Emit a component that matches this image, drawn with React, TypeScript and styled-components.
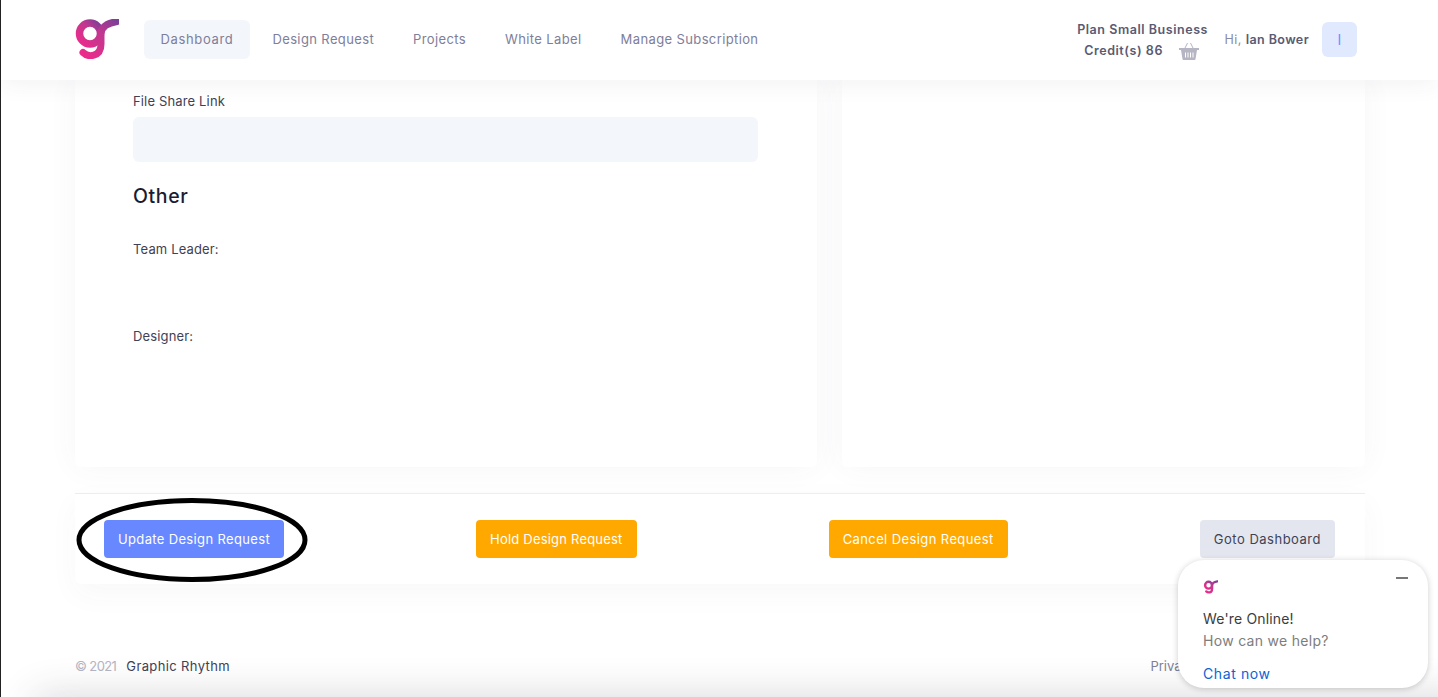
import styled, { createGlobalStyle } from "styled-components";

const GlobalStyle = createGlobalStyle`
  html, body {
    margin: 0;
    padding: 0;
    height: 100%;
    background: #fff;
    overflow: hidden;
  }
  * {
    box-sizing: border-box;
  }
  body {
    font-family: "Inter", "Liberation Sans", sans-serif;
    color: #3f3f5a;
  }
`;

const Page = styled.div`
  position: relative;
  width: 1438px;
  height: 697px;
  overflow: hidden;
  border-left: 1px solid #222;
  background: #fff;

  /* soft shadow of the bar that sits just under the fold */
  &::after {
    content: "";
    position: absolute;
    left: 34px;
    right: -60px;
    top: 697px;
    height: 40px;
    box-shadow: 0 0 40px rgba(50, 50, 70, 0.2);
  }
`;

const Header = styled.header`
  position: relative;
  z-index: 2;
  height: 80px;
  padding: 0 81px 2px 72px;
  display: flex;
  align-items: center;
  background: #fff;
  box-shadow: 0 2px 24px rgba(60, 60, 90, 0.07);
`;

const Logo = styled.svg`
  width: 46px;
  height: 40px;
  margin-right: 25px;
  flex: none;
`;

const Nav = styled.nav`
  display: flex;
  align-items: center;
  gap: 6px;
`;

const NavItem = styled.a<{ $active?: boolean }>`
  height: 39px;
  padding: 0 16.5px;
  display: flex;
  align-items: center;
  border-radius: 6px;
  font-size: 13px;
  letter-spacing: ${(p) => (p.$active ? "0.65px" : "0.38px")};
  color: #7e7e9a;
  background: ${(p) => (p.$active ? "#f3f6fb" : "transparent")};
`;

const Account = styled.div`
  margin-left: auto;
  display: flex;
  align-items: center;
`;

const Plan = styled.div`
  width: 134px;
  padding-top: 2px;
  text-align: center;
  font-size: 12.5px;
  font-weight: 600;
  line-height: 21px;
  letter-spacing: 0.55px;
  color: #5a5a72;
`;

const CreditRow = styled.div`
  display: flex;
  justify-content: center;
  align-items: center;
  gap: 16px;
  padding-right: 2px;
`;

const Hi = styled.div`
  margin-left: 15px;
  font-size: 12.5px;
  letter-spacing: 0.4px;
  color: #8a8aa3;

  b {
    font-weight: 600;
    color: #5a5a72;
  }
`;

const Avatar = styled.div`
  margin-left: 13px;
  width: 35px;
  height: 35px;
  display: flex;
  align-items: center;
  justify-content: center;
  border-radius: 6px;
  font-size: 14px;
  color: #6993ff;
  background: #e1e9ff;
`;

const Content = styled.main`
  width: 1290px;
  margin-left: 74px;
`;

const Columns = styled.div`
  display: grid;
  grid-template-columns: 742px 523px;
  gap: 25px;
`;

const Card = styled.section`
  height: 387px;
  background: #fff;
  box-shadow: 0 0 30px rgba(80, 70, 120, 0.05);
  border-radius: 0 0 6px 6px;
`;

const FormCard = styled(Card)`
  padding: 12px 59px 0 58px;
`;

const Label = styled.div`
  font-size: 13px;
  line-height: 18px;
  letter-spacing: 0.15px;
  color: #3f4254;
`;

const Input = styled.div`
  height: 45px;
  margin-top: 7px;
  border-radius: 6px;
  background: #f3f6fb;
`;

const SectionTitle = styled.h3`
  margin: 21px 0 31px;
  font-size: 19.5px;
  line-height: 26px;
  font-weight: 500;
  letter-spacing: 0.6px;
  color: #1b1b32;
`;

const Person = styled(Label)`
  margin-bottom: 69px;
`;

const ActionBar = styled.div`
  height: 91px;
  margin-top: 26px;
  padding: 0 30px 0 29px;
  display: flex;
  align-items: center;
  justify-content: space-between;
  background: #fff;
  border-top: 1px solid #ebedf3;
  box-shadow: 0 10px 30px rgba(80, 70, 120, 0.04);
  border-radius: 0 0 6px 6px;
`;

const Button = styled.button<{ $kind: "primary" | "warning" | "light"; $tracking: number }>`
  height: 38px;
  padding: 0 14px;
  border: 0;
  border-radius: 4px;
  font-family: inherit;
  font-size: 13px;
  letter-spacing: ${(p) => p.$tracking}px;
  color: ${(p) => (p.$kind === "light" ? "#3f4254" : "#fff")};
  background: ${(p) =>
    p.$kind === "primary"
      ? "#6788ff"
      : p.$kind === "warning"
      ? "#ffa800"
      : "#e4e6ef"};
`;

const Footer = styled.footer`
  margin-top: 73px;
  display: flex;
  justify-content: space-between;
  font-size: 13px;
  line-height: 18px;
`;

const Copy = styled.span`
  color: #b5b5c3;
  margin-right: 10px;
  letter-spacing: -0.6px;
`;

const Brand = styled.span`
  color: #3f4254;
  letter-spacing: 0.38px;
`;

const FooterLink = styled.span`
  color: #7e8299;
  margin-right: 169px;
`;

const Circle = styled.svg`
  position: absolute;
  left: 74px;
  top: 497px;
  width: 234px;
  height: 86px;
`;

const Chat = styled.aside`
  position: absolute;
  z-index: 3;
  left: 1177px;
  top: 560px;
  width: 250px;
  height: 128px;
  padding: 20px 25px 0;
  border-radius: 26px;
  background: #fff;
  box-shadow: 0 1px 6px rgba(0, 0, 0, 0.2);
`;

const ChatLogo = styled.svg`
  display: block;
  width: 15px;
  height: 14px;
  margin-bottom: 15px;
`;

const Minimize = styled.div`
  position: absolute;
  top: 17px;
  right: 20px;
  width: 12px;
  height: 2px;
  background: #777;
`;

const ChatTitle = styled.div`
  font-size: 14px;
  line-height: 20px;
  letter-spacing: 0.17px;
  color: #3c3c3c;
`;

const ChatText = styled.div`
  margin-top: 2px;
  font-size: 14px;
  line-height: 20px;
  letter-spacing: 0.3px;
  color: #7d7d7d;
`;

const ChatLink = styled.div`
  margin-top: 13px;
  font-size: 14px;
  line-height: 20px;
  letter-spacing: 0.6px;
  color: #0b63d6;
`;

function GrMark() {
  return (
    <>
      <defs>
        <linearGradient id="gr" x1="0" y1="1" x2="1" y2="0">
          <stop offset="0" stopColor="#ee2a8b" />
          <stop offset="0.6" stopColor="#c2388f" />
          <stop offset="1" stopColor="#7d3f98" />
        </linearGradient>
      </defs>
      <circle cx="17" cy="14.500" r="10.500" fill="none" stroke="url(#gr)" strokeWidth="7.500" />
      <path
        d="M10 33.500C15 38.500 28 38.500 28 25V15C28 7 35 4 44 2.500"
        fill="none"
        stroke="url(#gr)"
        strokeWidth="7"
        strokeLinecap="round"
      />
    </>
  );
}

function Basket() {
  return (
    <svg width="20" height="18" viewBox="0 0 20 18">
      <path d="M6 6l2.500-5M14 6l-2.500-5" stroke="#b5b5c3" strokeWidth="1" fill="none" />
      <path d="M0 6h20v2H0z" fill="#b5b5c3" />
      <path d="M2 8h16l-1.500 9a1 1 0 0 1-1 1H4.500a1 1 0 0 1-1-1z" fill="#b5b5c3" />
      <path d="M6.500 10.500v5M9 10.500v5M11.500 10.500v5M14 10.500v5" stroke="#fff" strokeWidth="1" />
    </svg>
  );
}

export default function App() {
  return (
    <Page>
      <GlobalStyle />
      <Header>
        <Logo viewBox="0 0 46 40">
          <GrMark />
        </Logo>
        <Nav>
          <NavItem $active>Dashboard</NavItem>
          <NavItem>Design Request</NavItem>
          <NavItem>Projects</NavItem>
          <NavItem>White Label</NavItem>
          <NavItem>Manage Subscription</NavItem>
        </Nav>
        <Account>
          <Plan>
            Plan Small Business
            <CreditRow>
              Credit(s) 86
              <Basket />
            </CreditRow>
          </Plan>
          <Hi>
            Hi, <b>Ian Bower</b>
          </Hi>
          <Avatar>I</Avatar>
        </Account>
      </Header>
      <Content>
        <Columns>
          <FormCard>
            <Label>File Share Link</Label>
            <Input />
            <SectionTitle>Other</SectionTitle>
            <Person>Team Leader:</Person>
            <Person>Designer:</Person>
          </FormCard>
          <Card />
        </Columns>
        <ActionBar>
          <Button $kind="primary" $tracking={0.35}>Update Design Request</Button>
          <Button $kind="warning" $tracking={0.2}>Hold Design Request</Button>
          <Button $kind="warning" $tracking={0.4}>Cancel Design Request</Button>
          <Button $kind="light" $tracking={0.5}>Goto Dashboard</Button>
        </ActionBar>
        <Footer>
          <div>
            <Copy>© 2021</Copy>
            <Brand>Graphic Rhythm</Brand>
          </div>
          <FooterLink>Privacy</FooterLink>
        </Footer>
      </Content>
      <Circle viewBox="0 0 234 86">
        <ellipse cx="117" cy="43" rx="113" ry="39.500" fill="none" stroke="#000" strokeWidth="5" />
      </Circle>
      <Chat>
        <ChatLogo viewBox="0 0 46 40">
          <GrMark />
        </ChatLogo>
        <Minimize />
        <ChatTitle>We're Online!</ChatTitle>
        <ChatText>How can we help?</ChatText>
        <ChatLink>Chat now</ChatLink>
      </Chat>
    </Page>
  );
}
